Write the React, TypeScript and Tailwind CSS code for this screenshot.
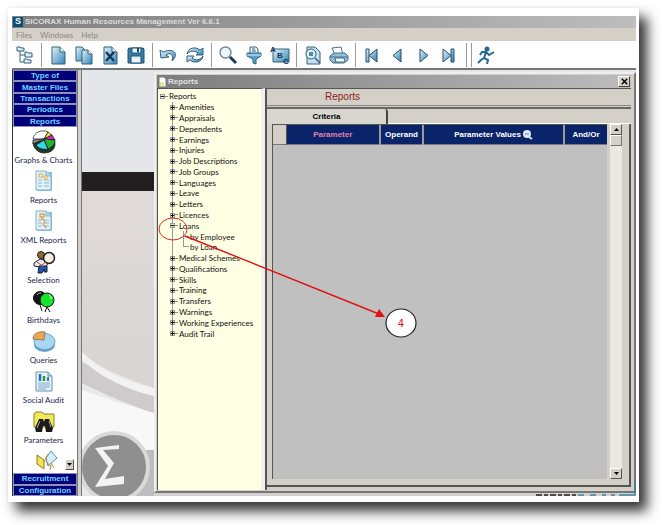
import React from 'react';
import { Minus, Plus, X } from 'lucide-react';

interface TreeNode {
  label: string;
  level: number;
  open?: boolean;
  lastChild?: boolean;
}

const TREE: TreeNode[] = [
  { label: 'Reports', level: 0, open: true },
  { label: 'Amenities', level: 1 },
  { label: 'Appraisals', level: 1 },
  { label: 'Dependents', level: 1 },
  { label: 'Earnings', level: 1 },
  { label: 'Injuries', level: 1 },
  { label: 'Job Descriptions', level: 1 },
  { label: 'Job Groups', level: 1 },
  { label: 'Languages', level: 1 },
  { label: 'Leave', level: 1 },
  { label: 'Letters', level: 1 },
  { label: 'Licences', level: 1 },
  { label: 'Loans', level: 1, open: true },
  { label: 'by Employee', level: 2 },
  { label: 'by Loan', level: 2, lastChild: true },
  { label: 'Medical Schemes', level: 1 },
  { label: 'Qualifications', level: 1 },
  { label: 'Skills', level: 1 },
  { label: 'Training', level: 1 },
  { label: 'Transfers', level: 1 },
  { label: 'Warnings', level: 1 },
  { label: 'Working Experiences', level: 1 },
  { label: 'Audit Trail', level: 1, lastChild: true },
];

const PAGE = 'M4 2h8l5 5v12H4z';

// Toolbar drawings, all on a 20x20 grid
const TOOL_ICONS: Record<string, React.ReactNode> = {
  Navigator: (
    <g fill="#dfeef5" stroke="#35617c">
      <path d="M5 6v11h4M5 10h5" fill="none" />
      <path d="M2 2h3l1 1h3v3H2zM10 7h2l1 1h4v4h-7zM9 14h3l1 1h3v3H9z" />
    </g>
  ),
  New: (
    <g stroke="#35617c">
      <path d={PAGE} fill="url(#blue)" />
      <path d="M12 2v5h5" fill="#eef7fb" />
    </g>
  ),
  Copy: (
    <g stroke="#35617c">
      <path d="M2 2h6l4 4v10H2z" fill="url(#blue)" />
      <path d="M8 5h6l4 4v10H8z" fill="url(#blue)" />
      <path d="M14 5v4h4" fill="#eef7fb" />
    </g>
  ),
  Delete: (
    <g stroke="#35617c">
      <path d={PAGE} fill="url(#blue)" />
      <path d="M12 2v5h5" fill="#eef7fb" />
      <path d="M6 7l8 9M14 7l-8 9" stroke="#12395c" strokeWidth="2.4" />
    </g>
  ),
  Save: (
    <g stroke="#1d4d70">
      <path d="M2 4l1-1h14l1 1v14H2z" fill="#3a7ea8" />
      <path d="M6 3h9v5H6zM5 11h10v7H5z" fill="#e6f2f8" />
      <path d="M12 3v4" strokeWidth="2" />
    </g>
  ),
  Undo: <path d="M1 5l1 8 8-1-3-2c4-3 8-1 6 6 7-6 3-14-9-9z" fill="url(#blue)" stroke="#35617c" />,
  Refresh: (
    <g fill="url(#blue)" stroke="#35617c">
      <path d="M2 9C3 3 10 1 15 5l3-2v7h-7l2-2C9 5 5 6 2 9z" />
      <path d="M18 11c-1 6-8 8-13 4l-3 2v-6h7l-2 2c4 3 8 2 11-2z" />
    </g>
  ),
  Find: (
    <g>
      <circle cx="7.5" cy="7.5" r="5.5" fill="#e9f6fb" stroke="#6f8794" strokeWidth="1.4" />
      <path d="M12 12l6 6" stroke="#173f5c" strokeWidth="3" />
    </g>
  ),
  Filter: (
    <g stroke="#35617c">
      <path d="M6 2h6l2 2v5H6z" fill="#eef6fa" />
      <path d="M8 4h3M8 6h4" />
      <path d="M3 8h14v3l-5 3v5l-3-1v-4l-6-3z" fill="#58a2cb" />
      <path d="M3 10h14" stroke="#d5edf7" />
    </g>
  ),
  Spelling: (
    <g>
      <path d="M3 4h16v13H3z" fill="url(#blue)" stroke="#35617c" />
      <g fontFamily="Liberation Sans" fontWeight="bold" fontSize="8" fill="#12395c">
        <text x="0" y="7">A</text>
        <text x="7" y="13">B</text>
        <text x="13" y="19">C</text>
      </g>
    </g>
  ),
  Preview: (
    <g stroke="#35617c">
      <path d={PAGE} fill="#c5e1ef" />
      <circle cx="8" cy="9" r="5" fill="#d9f1fb" stroke="#28627f" />
      <path d="M6 8h4M6 10h4M12 13l5 5" strokeWidth="1.6" />
    </g>
  ),
  Print: (
    <g stroke="#44708a">
      <path d="M3 3l9-1 2 8H6z" fill="#fff" />
      <path d="M1 11l4-3h11l3 3v4l-4 3H4l-3-3z" fill="#8fc0db" />
      <path d="M1 12h18M5 17l10-1" />
      <path d="M6 13h9l1 4H7z" fill="#f2f9fc" />
    </g>
  ),
  First: <path d="M4 4h3v13H4zM15 4v13l-8-6.5z" fill="url(#blue)" stroke="#244f6b" />,
  Previous: <path d="M13 4v13l-8-6.5z" fill="url(#blue)" stroke="#244f6b" />,
  Next: <path d="M6 4v13l8-6.5z" fill="url(#blue)" stroke="#244f6b" />,
  Last: <path d="M3 4v13l8-6.5zM11 4h3v13h-3z" fill="url(#blue)" stroke="#244f6b" />,
  Exit: (
    <g fill="none" stroke="#23698f" strokeWidth="2">
      <circle cx="11" cy="4" r="1.5" fill="#23698f" />
      <path d="M10 7l-2 6 4 2-1 4M8 13l-3 2-3 3M4 10l2-3h4l3 3 5-3" />
    </g>
  ),
};

const TOOLBAR = [
  'Navigator', '|', 'New', 'Copy', 'Delete', 'Save', '|', 'Undo', 'Refresh', '|', 'Find', 'Filter',
  'Spelling', '|', 'Preview', 'Print', '|', 'First', 'Previous', 'Next', 'Last', '|', '|', 'Exit',
];

const reportSheet = (
  <g>
    <path d="M5 2h15v19H5z" fill="#8fbfdc" />
    <path d="M4 1h10l5 5v14H4z" fill="#e3f1f8" stroke="#7fb2cf" />
    <path d="M14 1v5h5" fill="#b9dcee" stroke="#7fb2cf" />
    <path d="M6 10h4M6 13h4M6 16h4M12 10h5M12 13h5M12 16h5" stroke="#8db9d3" />
  </g>
);

// Side bar drawings, all on a 24x24 grid
const SIDE_ITEMS: { label: string; icon: React.ReactNode }[] = [
  {
    label: 'Graphs & Charts',
    icon: (
      <g stroke="#111" strokeWidth="0.7">
        <path d="M1 12c0 6 5 11 11 11s11-3 11-9l-1-5z" fill="#1d3a2a" />
        <path d="M12 9L1 9C2 2 10-1 16 2z" fill="#fff" />
        <path d="M12 9l4-7 4 3z" fill="#f6e12c" />
        <path d="M12 9l8-4 3 5z" fill="#d321c5" />
        <path d="M12 9l11 1c0 5-3 7-7 9z" fill="#25b52b" />
        <path d="M12 10l4 9c-5 1-9 0-12-4z" fill="#35d5e5" />
        <path d="M12 9L1 10v4z" fill="#8d8d8d" />
      </g>
    ),
  },
  {
    label: 'Reports',
    icon: (
      <g>
        {reportSheet}
        <path d="M7 4h4v3H7zM12 6h3v3h-3z" fill="#fbefbf" stroke="#d6b464" />
      </g>
    ),
  },
  {
    label: 'XML Reports',
    icon: (
      <g>
        {reportSheet}
        <path d="M8 4h4v3H8zM9 9h2l2 3-2 2 3 4" fill="none" stroke="#d9a74a" strokeWidth="1.3" />
      </g>
    ),
  },
  {
    label: 'Selection',
    icon: (
      <g stroke="#222">
        <path d="M2 13l6-4 9 2-3 6H8l-6-1z" fill="#e7ecf4" />
        <path d="M7 16h8v6h-3v-3l-2 4H6z" fill="#1b55c0" />
        <circle cx="9" cy="5" r="3.5" fill="#8d6b32" />
        <circle cx="17" cy="8" r="5.5" fill="#f4efe2" strokeWidth="1.5" />
        <path d="M5 12l7 5M14 12l-4 3" stroke="#c34038" />
      </g>
    ),
  },
  {
    label: 'Birthdays',
    icon: (
      <g stroke="#111">
        <circle cx="8" cy="8" r="6.5" fill="#151515" />
        <path d="M5 5c1-2 2-2 4-2" stroke="#bbb" fill="none" />
        <circle cx="15" cy="10" r="7" fill="#17e52b" />
        <path d="M17 5c2 1 2 2 2 4" stroke="#fff" fill="none" />
        <path d="M8 15l2 6M15 17l-2 5M15 17l3 5" fill="none" />
      </g>
    ),
  },
  {
    label: 'Queries',
    icon: (
      <g>
        <path d="M2 12v3c1 9 20 9 21 0v-3z" fill="#5f9fca" />
        <ellipse cx="12.5" cy="11.5" rx="10.5" ry="8" fill="#a9d6f3" stroke="#70a9cd" />
        <path d="M12 10L1 9c0-5 5-8 12-7z" fill="#eda64c" stroke="#8a7c62" />
      </g>
    ),
  },
  {
    label: 'Social Audit',
    icon: (
      <g>
        <path d="M4 2h12l4 4v15H4z" fill="#e9f3fa" stroke="#6691ad" />
        <path d="M16 2v4h4" fill="#b9dcee" stroke="#6691ad" />
        <path d="M8 4v7" stroke="#246fae" strokeWidth="2.5" />
        <path d="M12 6v5" stroke="#2c9a3b" strokeWidth="2.5" />
        <path d="M16 7v4" stroke="#3178ba" strokeWidth="2" />
        <path d="M6 13h12M6 15h12M6 17h12M6 19h8" stroke="#7ba9c6" />
      </g>
    ),
  },
  {
    label: 'Parameters',
    icon: (
      <g>
        <path d="M2 4l2-2h6l2 2h10v13H2z" fill="#f3e65a" stroke="#8a8420" />
        <path d="M7 9h4l1 3 1-3h4l4 9-1 4h-6l-1-6h-2l-1 6H4l-1-4z" fill="#1b1b1b" />
        <path d="M8 11l-3 7M17 11l2 6" stroke="#aaa" />
      </g>
    ),
  },
];

const SIGMA = 'M14 19l24-3v4l-16 1 11 13-9 16 19-3v8l-29 3 13-21z';

function Tool({ name }: { name: string }) {
  return (
    <button aria-label={name} className="flex w-[26px] justify-center">
      <svg viewBox="0 0 20 20" className="size-5">{TOOL_ICONS[name]}</svg>
    </button>
  );
}

function GroupButton({ children }: { children: React.ReactNode }) {
  return (
    <button className="flex items-center justify-center border border-[#8f8fb8] bg-[#00007b] text-[8px] leading-[9px] font-bold text-[#6fd5ff]">
      {children}
    </button>
  );
}

function ScrollButton({ label, d }: { label: string; d: string }) {
  return (
    <button aria-label={label} className="flex h-[11px] w-full shrink-0 items-center justify-center border border-t-white border-r-[#555] border-b-[#555] border-l-white bg-[#d4d0c8]">
      <svg viewBox="0 0 5 3" className="h-[3px] w-[5px]"><path d={d} /></svg>
    </button>
  );
}

function TreeRow({ node }: { node: TreeNode }) {
  const Sign = node.open ? Minus : Plus;
  if (node.level === 2) {
    return (
      <li className="flex items-center pl-[14px]">
        <span className="h-full w-[11px] border-l border-[#999]" />
        <span className="mr-px h-full w-[6px]">
          <span className="block h-1/2 border-b border-l border-[#999]" />
          {!node.lastChild && <span className="block h-1/2 border-l border-[#999]" />}
        </span>
        {node.label}
      </li>
    );
  }
  return (
    <li className={node.level === 0 ? 'flex items-center pl-[2px]' : 'flex items-center pl-3'}>
      <span className="flex h-full w-[5px] flex-col items-center">
        <span className={node.level === 0 ? 'flex-1' : 'w-px flex-1 bg-[#999]'} />
        <span className="flex size-[5px] items-center justify-center border border-[#999] bg-[#e9e9d2]">
          <Sign className="size-[5px] shrink-0" strokeWidth={5} />
        </span>
        <span className={node.level === 0 || node.lastChild ? 'flex-1' : 'w-px flex-1 bg-[#999]'} />
      </span>
      <span className="mr-px h-px w-[3px] bg-[#888]" />
      {node.label}
    </li>
  );
}

function ReportsWindow() {
  const head = 'border-r-2 border-[#9a9a9a] p-0 text-center font-bold';
  return (
    <section className="relative flex min-w-0 flex-1 flex-col border-2 border-t-[#eee] border-r-[#777] border-b-[#777] border-l-[#eee] bg-[#d4d0c8] py-px pr-[3px] pl-px">
      <header className="flex h-[13px] items-center bg-linear-to-r from-[#7d7d7d] to-[#bdbdbd] pr-px pl-px text-[8px] font-bold text-[#e2e2e2]">
        <svg viewBox="0 0 9 12" className="mr-px h-3 w-[9px]">
          <path d="M1 1h5l2 2v8H1z" fill="#fff" stroke="#777" />
          <path d="M2 6h4v4H2z" fill="#e6e68b" />
        </svg>
        <h2 className="flex-1">Reports</h2>
        <button aria-label="Close" className="flex h-[11px] w-[12px] items-center justify-center border border-t-white border-r-[#444] border-b-[#444] border-l-white bg-[#d4d0c8] text-black">
          <X className="size-[9px]" strokeWidth={4} />
        </button>
      </header>
      <div className="flex min-h-0 flex-1">
        <nav className="w-[108px] shrink-0 border-t border-r-4 border-l border-t-[#555] border-r-[#f0f0ee] border-l-[#555] bg-[#ffffe3] pt-[2px]">
          <ul className="grid h-[248px] auto-rows-fr font-[Lato,sans-serif] text-[8px] leading-[10px] text-[#111]">
            {TREE.map((node) => (
              <TreeRow key={node.label} node={node} />
            ))}
          </ul>
        </nav>
        <div className="flex min-w-0 flex-1 flex-col border-t border-l-2 border-[#555]">
          <h3 className="h-[17px] border-b border-[#888] pl-[58px] text-[10px] leading-4 text-[#8b1a1a]">Reports</h3>
          <div role="tablist" className="mt-px flex h-[17px] border-t-2 border-[#666]">
            <button role="tab" aria-selected="true" className="w-[121px] rounded-tr-[3px] border-r-2 border-[#444] bg-[#d9d6cf] text-[8px] leading-[14px] font-bold">
              Criteria
            </button>
            <span className="flex-1 border-b border-white" />
          </div>
          <div className="mb-[3px] flex min-h-0 flex-1 border-r-2 border-b-2 border-[#555] pr-[7px] pb-[6px] pl-[5px]">
            <div className="min-w-0 flex-1 border-t border-l border-[#555] bg-[#c0c0c0]">
              <table className="h-5 w-full table-fixed border-collapse text-[8px] leading-3 text-white">
                <thead>
                  <tr className="border-b border-[#777] bg-[#0a246a]">
                    <th scope="col" aria-label="Row" className="w-[13px] border-r border-[#555] bg-[#d4d0c8] p-0" />
                    <th scope="col" className={`${head} text-[#e07fae]`}>Parameter</th>
                    <th scope="col" className={`${head} w-[43px]`}>Operand</th>
                    <th scope="col" className={`${head} w-[141px]`}>
                      <span className="flex items-center justify-center gap-px">
                        Parameter Values
                        <svg viewBox="0 0 11 11" className="size-[11px]">
                          <circle cx="5" cy="5" r="4" fill="#dceaf5" />
                          <path d="M3 5h4" stroke="#5d7da5" />
                          <path d="M7 8l3 2" stroke="#dceaf5" strokeWidth="2" />
                        </svg>
                      </span>
                    </th>
                    <th scope="col" className="w-[43px] p-0 text-center font-bold">And/Or</th>
                  </tr>
                </thead>
              </table>
            </div>
            <div className="w-[3px] bg-[#d4d0c8]" />
            <div className="flex w-3 flex-col justify-between bg-[#e9e8e3]">
              <div>
                <ScrollButton label="Scroll up" d="M0 3L2.5 0 5 3z" />
                <div className="h-[11px] border border-t-white border-r-[#777] border-b-[#777] border-l-white bg-[#d4d0c8]" />
              </div>
              <ScrollButton label="Scroll down" d="M0 0h5L2.5 3z" />
            </div>
          </div>
        </div>
      </div>
      {/* Callout for step 4 */}
      <svg viewBox="0 0 280 140" className="pointer-events-none absolute top-[138px] left-0 h-[140px] w-[280px]">
        <ellipse cx="17" cy="17" rx="14" ry="11" fill="none" stroke="#d42a2a" />
        <path d="M29 24l194 78" stroke="#e01010" strokeWidth="1.4" />
        <path d="M229 105l-10 0 4-8z" fill="#e01010" />
        <ellipse cx="245" cy="111" rx="15" ry="14" fill="#fff" stroke="#222" strokeWidth="1.2" />
        <text x="245" y="115" textAnchor="middle" fontSize="10" fill="#e01010" fontFamily="DejaVu Sans">4</text>
      </svg>
    </section>
  );
}

export default function App() {
  return (
    <div className="flex min-h-screen bg-white pt-2 pr-[23px] pb-[23px] pl-2 font-['Liberation_Sans',sans-serif]">
      <svg className="absolute size-0" aria-hidden="true">
        <linearGradient id="blue" x1="0" y1="0" x2="1" y2="1">
          <stop offset="0" stopColor="#e4f4fb" />
          <stop offset="1" stopColor="#2f83b5" />
        </linearGradient>
      </svg>
      <div className="flex min-w-0 flex-1 bg-white pt-2 pr-[3px] pb-[6px] pl-1 shadow-[8px_9px_12px_#333,0_0_3px_#eee]">
        <main className="flex min-w-0 flex-1 flex-col bg-[#d4d0c8]">
          <header className="flex h-3 items-center gap-[2px] bg-linear-to-r from-[#808080] to-[#bdbdbd] pl-px text-[8px] font-bold text-[#dcdcdc]">
            <span className="flex h-[10px] w-[10px] items-center justify-center bg-[#075174] text-[9px] text-white">S</span>
            <h1>SICORAX Human Resources Management Ver 6.6.1</h1>
          </header>
          <nav className="flex h-[13px] items-center gap-2 pl-1 font-[Lato,sans-serif] text-[8px] text-[#8a877f]">
            <button>Files</button>
            <button>Windows</button>
            <button>Help</button>
          </nav>
          <div className="flex h-[29px] items-center border-b-2 border-[#777] bg-white">
            {TOOLBAR.map((name, i) =>
              name === '|' ? (
                <span key={i} className={`flex h-6 justify-center ${TOOLBAR[i - 1] === '|' ? 'w-[3px]' : 'w-[7px]'}`}>
                  <span className="w-px bg-[#999]" />
                </span>
              ) : (
                <Tool key={i} name={name} />
              )
            )}
          </div>
          <div className="flex min-h-0 flex-1">
            <aside className="flex w-[65px] shrink-0 flex-col border-l border-[#333] bg-white">
              <div className="grid h-[57px] auto-rows-fr">
                {['Type of', 'Master Files', 'Transactions', 'Periodics', 'Reports'].map((g) => (
                  <GroupButton key={g}>{g}</GroupButton>
                ))}
              </div>
              <div className="flex flex-1 flex-col pt-[3px] font-[Lato,sans-serif] text-[8px] leading-[11px] text-[#25254f]">
                {SIDE_ITEMS.map((item) => (
                  <button key={item.label} className="flex h-10 flex-col items-center gap-px pr-[3px] whitespace-nowrap">
                    <svg viewBox="0 0 24 24" className="size-6">{item.icon}</svg>
                    {item.label}
                  </button>
                ))}
                <div className="flex items-end justify-end gap-[3px] pr-[3px]">
                  <svg viewBox="0 0 22 20" className="h-5 w-[22px]">
                    <path d="M1 5l7 5v9l-7-5z" fill="#f5e24e" stroke="#8e7b22" />
                    <path d="M10 8l5-7 6 7-9 8z" fill="#d6f0fb" stroke="#5a91ad" />
                    <path d="M8 12l4-8M10 12l5 4-1 4M15 13l3 5" fill="none" stroke="#b08a28" />
                  </svg>
                  <span className="ml-1 flex w-[9px]"><ScrollButton label="More items" d="M0 0h5L2.5 3z" /></span>
                </div>
              </div>
              <div className="grid h-[23px] auto-rows-fr">
                <GroupButton>Recruitment</GroupButton>
                <GroupButton>Configuration</GroupButton>
              </div>
            </aside>
            <div className="w-[5px] border-r border-l border-[#777] bg-[#d4d0c8]" />
            <div className="relative flex min-w-0 flex-1 bg-[linear-gradient(#e5e6ea_102px,#231f20_102px,#231f20_121px,#e0dbd9_121px,#d3d1d0)] pt-[2px] pb-[3px] pl-[72px]">
              <svg viewBox="0 0 72 144" className="absolute bottom-0 left-0 h-36 w-[72px]">
                <path d="M0 2c18 14 42 24 72 34v108H0z" fill="#e9e9e9" />
                <path d="M0 10c22 11 46 22 72 26v26C46 51 22 43 0 31z" fill="#cdcbcb" />
                <path d="M0 0c18 18 42 30 72 36v8C46 38 20 26 0 8z" fill="#f3f2f2" />
                <path d="M0 38c22 8 48 16 72 23v37H0z" fill="#f8f8f8" />
                <path d="M50 98h22v46H50z" fill="#bdbdbd" />
                <circle cx="32" cy="115" r="34" fill="#8f8f8f" stroke="#d9d9d9" strokeWidth="4" />
                <path d={SIGMA} transform="translate(-1 77)" fill="#f3f3f3" />
              </svg>
              <ReportsWindow />
              <svg viewBox="0 0 100 16" className="absolute right-0 bottom-0 h-4 w-[100px]">
                <path d="M0 15h40" stroke="#222" strokeWidth="1.5" strokeDasharray="6 2 4 2" />
                <path d="M42 15h57V1" fill="none" stroke="#3f8199" strokeWidth="1.5" strokeDasharray="6 6 6 6 4 5 4 4 40 0" />
              </svg>
            </div>
          </div>
        </main>
      </div>
    </div>
  );
}
